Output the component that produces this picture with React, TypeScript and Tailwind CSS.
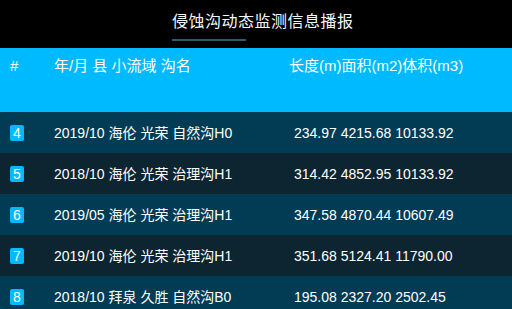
const rows = [
  { id: 4, info: "2019/10 海伦 光荣 自然沟H0", nums: "234.97 4215.68 10133.92" },
  { id: 5, info: "2018/10 海伦 光荣 治理沟H1", nums: "314.42 4852.95 10133.92" },
  { id: 6, info: "2019/05 海伦 光荣 治理沟H1", nums: "347.58 4870.44 10607.49" },
  { id: 7, info: "2019/10 海伦 光荣 治理沟H1", nums: "351.68 5124.41 11790.00" },
  { id: 8, info: "2018/10 拜泉 久胜 自然沟B0", nums: "195.08 2327.20 2502.45" },
]

export default function App() {
  return (
    <div
      className="w-[512px] h-[309px] overflow-hidden bg-black text-white"
      style={{ fontFamily: '"Liberation Sans", "Noto Sans CJK SC", sans-serif' }}
    >
      {/* title */}
      <div className="h-[48px] pl-[172px] pt-[12px]">
        <div className="text-[16px] leading-[20px] tracking-[0.5px] text-[#f4f8ff]">侵蚀沟动态监测信息播报</div>
        <div className="mt-[7px] w-[74px] h-[2px] bg-[#2b5a6e]" />
      </div>

      {/* table head */}
      <div className="h-[64px] bg-[#00baff] grid grid-cols-[54px_235px_1fr] pt-[8px] text-[15px] leading-[20px]">
        <div className="pl-[10px]">#</div>
        <div>年/月 县 小流域 沟名</div>
        <div>长度(m)面积(m2)体积(m3)</div>
      </div>

      {/* table body */}
      {rows.map((row, i) => (
        <div
          key={row.id}
          className={
            "h-[41px] grid grid-cols-[54px_235px_1fr] items-center text-[14px] leading-[20px] " +
            (i % 2 === 0 ? "bg-[#013c54]" : "bg-[#0c2531]")
          }
        >
          <div className="pl-[10px]">
            <span className="flex w-[14px] h-[16px] items-center justify-center rounded-[2px] bg-[#00baff] text-[14px]">
              {row.id}
            </span>
          </div>
          <div>{row.info}</div>
          <div className="pl-[5px]">{row.nums}</div>
        </div>
      ))}
    </div>
  )
}
